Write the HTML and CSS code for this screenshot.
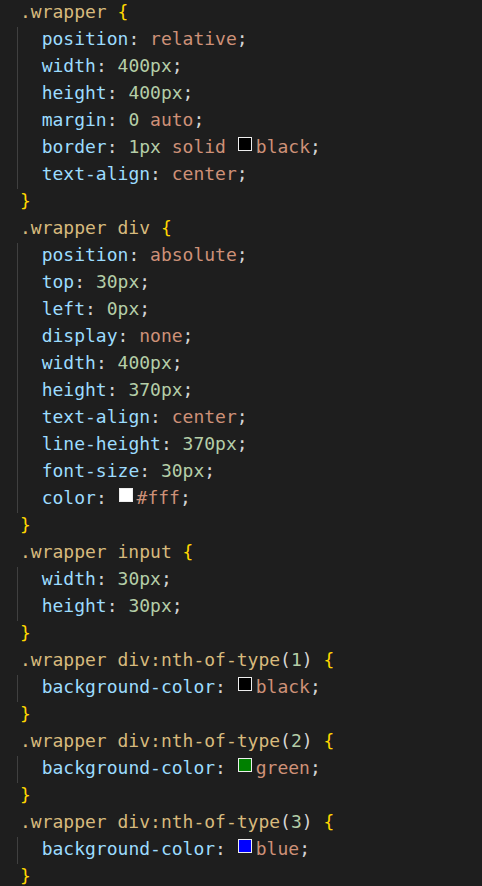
FILE: index.html
```html
<!DOCTYPE html>
<html>
<head>
<meta charset="utf-8">
<link rel="stylesheet" href="styles.css">
</head>
<body>
<div class="code">
  <div class="line"><span class="sel">.wrapper</span> <span class="br">{</span></div>
  <div class="block">
    <div class="line">  <span class="prop">position</span><span class="pn">:</span> <span class="val">relative</span><span class="pn">;</span></div>
    <div class="line">  <span class="prop">width</span><span class="pn">:</span> <span class="num">400px</span><span class="pn">;</span></div>
    <div class="line">  <span class="prop">height</span><span class="pn">:</span> <span class="num">400px</span><span class="pn">;</span></div>
    <div class="line">  <span class="prop">margin</span><span class="pn">:</span> <span class="num">0</span> <span class="val">auto</span><span class="pn">;</span></div>
    <div class="line">  <span class="prop">border</span><span class="pn">:</span> <span class="num">1px</span> <span class="val">solid</span> <span class="sw sw-black"></span><span class="val">black</span><span class="pn">;</span></div>
    <div class="line">  <span class="prop">text-align</span><span class="pn">:</span> <span class="val">center</span><span class="pn">;</span></div>
  </div>
  <div class="line"><span class="br">}</span></div>

  <div class="line"><span class="sel">.wrapper div</span> <span class="br">{</span></div>
  <div class="block">
    <div class="line">  <span class="prop">position</span><span class="pn">:</span> <span class="val">absolute</span><span class="pn">;</span></div>
    <div class="line">  <span class="prop">top</span><span class="pn">:</span> <span class="num">30px</span><span class="pn">;</span></div>
    <div class="line">  <span class="prop">left</span><span class="pn">:</span> <span class="num">0px</span><span class="pn">;</span></div>
    <div class="line">  <span class="prop">display</span><span class="pn">:</span> <span class="val">none</span><span class="pn">;</span></div>
    <div class="line">  <span class="prop">width</span><span class="pn">:</span> <span class="num">400px</span><span class="pn">;</span></div>
    <div class="line">  <span class="prop">height</span><span class="pn">:</span> <span class="num">370px</span><span class="pn">;</span></div>
    <div class="line">  <span class="prop">text-align</span><span class="pn">:</span> <span class="val">center</span><span class="pn">;</span></div>
    <div class="line">  <span class="prop">line-height</span><span class="pn">:</span> <span class="num">370px</span><span class="pn">;</span></div>
    <div class="line">  <span class="prop">font-size</span><span class="pn">:</span> <span class="num">30px</span><span class="pn">;</span></div>
    <div class="line">  <span class="prop">color</span><span class="pn">:</span> <span class="sw sw-white"></span><span class="val">#fff</span><span class="pn">;</span></div>
  </div>
  <div class="line"><span class="br">}</span></div>

  <div class="line"><span class="sel">.wrapper input</span> <span class="br">{</span></div>
  <div class="block">
    <div class="line">  <span class="prop">width</span><span class="pn">:</span> <span class="num">30px</span><span class="pn">;</span></div>
    <div class="line">  <span class="prop">height</span><span class="pn">:</span> <span class="num">30px</span><span class="pn">;</span></div>
  </div>
  <div class="line"><span class="br">}</span></div>

  <div class="line"><span class="sel">.wrapper div:nth-of-type</span><span class="pn">(</span><span class="num">1</span><span class="pn">)</span> <span class="br">{</span></div>
  <div class="block">
    <div class="line">  <span class="prop">background-color</span><span class="pn">:</span> <span class="sw sw-black"></span><span class="val">black</span><span class="pn">;</span></div>
  </div>
  <div class="line"><span class="br">}</span></div>

  <div class="line"><span class="sel">.wrapper div:nth-of-type</span><span class="pn">(</span><span class="num">2</span><span class="pn">)</span> <span class="br">{</span></div>
  <div class="block">
    <div class="line">  <span class="prop">background-color</span><span class="pn">:</span> <span class="sw sw-green"></span><span class="val">green</span><span class="pn">;</span></div>
  </div>
  <div class="line"><span class="br">}</span></div>

  <div class="line"><span class="sel">.wrapper div:nth-of-type</span><span class="pn">(</span><span class="num">3</span><span class="pn">)</span> <span class="br">{</span></div>
  <div class="block">
    <div class="line">  <span class="prop">background-color</span><span class="pn">:</span> <span class="sw sw-blue"></span><span class="val">blue</span><span class="pn">;</span></div>
  </div>
  <div class="line"><span class="br">}</span></div>
</div>
</body>
</html>
```

FILE: styles.css
```css
html, body {
  margin: 0;
  padding: 0;
  background: #1e1e1e;
}

.code {
  padding-left: 20px;
  font-family: "DejaVu Sans Mono", "Liberation Mono", monospace;
  font-size: 18px;
  color: #d4d4d4;
}

.line {
  height: 23px;
  line-height: 23px;
  padding-bottom: 4px;
  white-space: pre;
}

.block {
  margin-left: -3px;
  padding-left: 2px;
  border-left: 1px solid #404040;
}

.sel { color: #d7ba7d; }
.br { color: #ffd700; }
.prop { color: #9cdcfe; }
.pn { color: #d4d4d4; }
.val { color: #ce9178; }
.num { color: #b5cea8; }

.sw {
  display: inline-block;
  box-sizing: border-box;
  width: 14px;
  height: 14px;
  border: 1px solid #eeeeee;
  margin: 0 4px 0 1px;
  vertical-align: 2px;
}
.sw-black { background: #000000; }
.sw-white { background: #ffffff; }
.sw-green { background: #008000; }
.sw-blue { background: #0000ff; }
```
